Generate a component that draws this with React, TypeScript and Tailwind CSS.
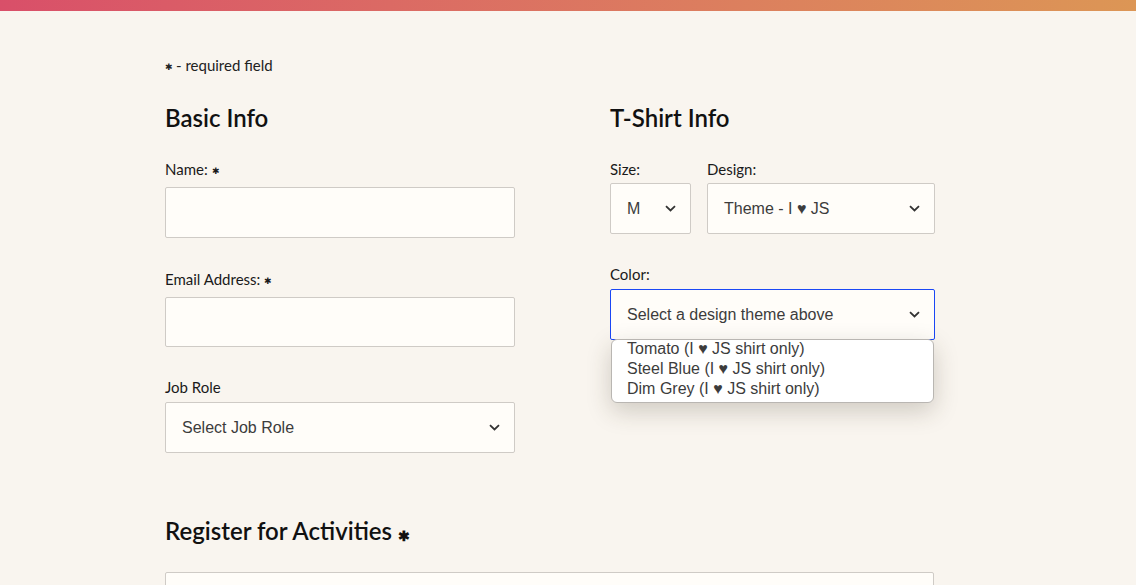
import React from 'react'

const Chevron = () => (
  <svg width="11" height="7" viewBox="0 0 11 7" className="shrink-0">
    <path d="M1 1.2 L5.5 5.5 L10 1.2" fill="none" stroke="#333" strokeWidth="1.8" />
  </svg>
)

function FakeSelect({ value, className = '', focused = false }: { value: string; className?: string; focused?: boolean }) {
  return (
    <div
      className={`h-[51px] flex items-center justify-between pl-4 pr-[14px] bg-[#fffdf9] rounded-[2px] border ${
        focused ? 'border-[#1a47f5]' : 'border-[#cfcbc6]'
      } ${className}`}
    >
      <span className="text-[16px] text-[#3c3c3c] font-['Liberation_Sans',Arial,sans-serif]">{value}</span>
      <Chevron />
    </div>
  )
}

const SmallStar = () => <span className="text-[9px] relative -top-[1px]">✱</span>

export default function App() {
  return (
    <div className="h-screen overflow-hidden bg-[#f9f5ef] font-['Lato','Noto_Sans',sans-serif] text-[#111]">
      <div className="h-[11px] bg-gradient-to-r from-[#d94f69] to-[#dc9655]" />

      <div className="pl-[165px] pt-[44px]">
        <div className="text-[15px] leading-5 text-[#222]">
          <span className="text-[9px] relative -top-[1px] mr-[3px]">✱</span>- required field
        </div>

        <div className="flex gap-[95px] mt-[26px]">
          {/* Basic Info */}
          <div className="w-[350px]">
            <h2 className="text-[24px] leading-7 font-semibold mb-[27px]">Basic Info</h2>
            <div className="text-[15px] leading-5 text-[#1a1a1a] mb-[5px]">
              Name: <SmallStar />
            </div>
            <div className="h-[51px] bg-[#fffdf9] border border-[#cfcbc6] rounded-[2px]" />

            <div className="mt-[31px]">
              <div className="text-[15px] leading-5 text-[#1a1a1a] mb-[5px]">
                Email Address: <SmallStar />
              </div>
              <div className="h-[50px] bg-[#fffdf9] border border-[#cfcbc6] rounded-[2px]" />
            </div>

            <div className="mt-[30px]">
              <div className="text-[15px] leading-5 text-[#1a1a1a] mb-[5px]">Job Role</div>
              <FakeSelect value="Select Job Role" />
            </div>
          </div>

          {/* T-Shirt Info */}
          <div className="w-[325px]">
            <h2 className="text-[24px] leading-7 font-semibold mb-[27px]">T-Shirt Info</h2>
            <div className="flex gap-4">
              <div className="w-[81px]">
                <div className="text-[15px] leading-5 text-[#1a1a1a] mb-[4px]">Size:</div>
                <FakeSelect value="M" />
              </div>
              <div className="flex-1">
                <div className="text-[15px] leading-5 text-[#1a1a1a] mb-[4px]">Design:</div>
                <FakeSelect value="Theme - I ♥ JS" />
              </div>
            </div>

            <div className="mt-[30px] relative">
              <div className="text-[15px] leading-5 text-[#1a1a1a] mb-[5px]">Color:</div>
              <FakeSelect value="Select a design theme above" focused className="h-[50px]" />
              <div className="absolute left-[1px] right-[1px] top-[75px] bg-white border border-[#b9b6b2] rounded-[6px] shadow-[0_8px_24px_rgba(60,50,30,0.22)] pb-[3px] pl-[15px] font-['Liberation_Sans',Arial,sans-serif] text-[16px] leading-5 text-[#3c3c3c]">
                <div className="-mt-[1px]">Tomato (I ♥ JS shirt only)</div>
                <div>Steel Blue (I ♥ JS shirt only)</div>
                <div>Dim Grey (I ♥ JS shirt only)</div>
              </div>
            </div>
          </div>
        </div>

        <h2 className="mt-[64px] text-[24px] leading-7 font-semibold">
          Register for Activities <span className="text-[14px] relative top-[1px]">✱</span>
        </h2>
        <div className="mt-[23px] w-[769px] h-[40px] bg-[#fffdf9] border border-[#cfcbc6] rounded-[2px]" />
      </div>
    </div>
  )
}
